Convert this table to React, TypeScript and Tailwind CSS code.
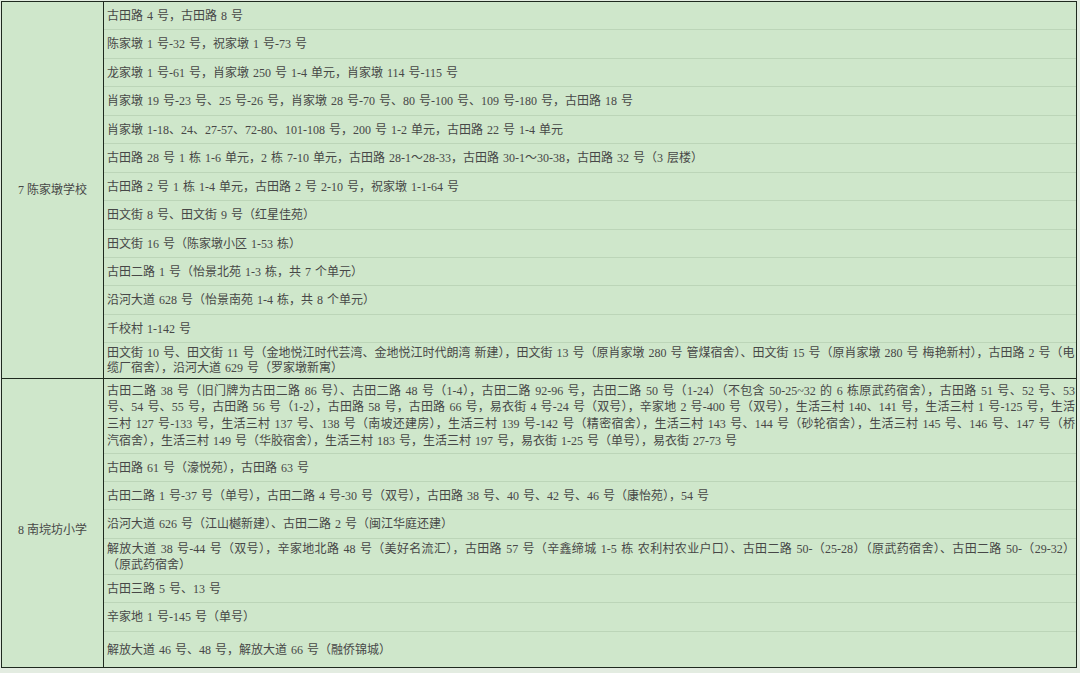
import React from "react";

type Line = { t: string; j?: boolean };
type Row = { h: string; lines: Line[]; leading?: string };

const L = (t: string, j = false): Line => ({ t, j });

const group1: Row[] = [
  { h: "h-[28px]", lines: [L("古田路 4 号，古田路 8 号")] },
  { h: "h-[29px]", lines: [L("陈家墩 1 号-32 号，祝家墩 1 号-73 号")] },
  { h: "h-[28px]", lines: [L("龙家墩 1 号-61 号，肖家墩 250 号 1-4 单元，肖家墩 114 号-115 号")] },
  { h: "h-[29px]", lines: [L("肖家墩 19 号-23 号、25 号-26 号，肖家墩 28 号-70 号、80 号-100 号、109 号-180 号，古田路 18 号")] },
  { h: "h-[28px]", lines: [L("肖家墩 1-18、24、27-57、72-80、101-108 号，200 号 1-2 单元，古田路 22 号 1-4 单元")] },
  { h: "h-[29px]", lines: [L("古田路 28 号 1 栋 1-6 单元，2 栋 7-10 单元，古田路 28-1～28-33，古田路 30-1～30-38，古田路 32 号（3 层楼）")] },
  { h: "h-[28px]", lines: [L("古田路 2 号 1 栋 1-4 单元，古田路 2 号 2-10 号，祝家墩 1-1-64 号")] },
  { h: "h-[29px]", lines: [L("田文街 8 号、田文街 9 号（红星佳苑）")] },
  { h: "h-[28px]", lines: [L("田文街 16 号（陈家墩小区 1-53 栋）")] },
  { h: "h-[28px]", lines: [L("古田二路 1 号（怡景北苑 1-3 栋，共 7 个单元）")] },
  { h: "h-[29px]", lines: [L("沿河大道 628 号（怡景南苑 1-4 栋，共 8 个单元）")] },
  { h: "h-[28px]", lines: [L("千校村 1-142 号")] },
  {
    h: "h-[35px]",
    leading: "leading-[15px]",
    lines: [
      L("田文街 10 号、田文街 11 号（金地悦江时代芸湾、金地悦江时代朗湾 新建），田文街 13 号（原肖家墩 280 号 管煤宿舍）、田文街 15 号（原肖家墩 280 号 梅艳新村），古田路 2 号（电"),
      L("缆厂宿舍），沿河大道 629 号（罗家墩新寓）"),
    ],
  },
];

const group2: Row[] = [
  {
    h: "h-[75px]",
    leading: "leading-[16.7px]",
    lines: [
      L("古田二路 38 号（旧门牌为古田二路 86 号）、古田二路 48 号（1-4），古田二路 92-96 号，古田二路 50 号（1-24）（不包含 50-25~32 的 6 栋原武药宿舍），古田路 51 号、52 号、53", true),
      L("号、54 号、55 号，古田路 56 号（1-2），古田路 58 号，古田路 66 号，易衣街 4 号-24 号（双号），辛家地 2 号-400 号（双号），生活三村 140、141 号，生活三村 1 号-125 号，生活", true),
      L("三村 127 号-133 号，生活三村 137 号、138 号（南坡还建房），生活三村 139 号-142 号（精密宿舍），生活三村 143 号、144 号（砂轮宿舍），生活三村 145 号、146 号、147 号（桥", true),
      L("汽宿舍），生活三村 149 号（华胶宿舍），生活三村 183 号，生活三村 197 号，易衣街 1-25 号（单号），易衣街 27-73 号"),
    ],
  },
  { h: "h-[28px]", lines: [L("古田路 61 号（濠悦苑），古田路 63 号")] },
  { h: "h-[28px]", lines: [L("古田二路 1 号-37 号（单号），古田二路 4 号-30 号（双号），古田路 38 号、40 号、42 号、46 号（康怡苑），54 号")] },
  { h: "h-[29px]", lines: [L("沿河大道 626 号（江山樾新建）、古田二路 2 号（闽江华庭还建）")] },
  {
    h: "h-[36px]",
    leading: "leading-[16px]",
    lines: [
      L("解放大道 38 号-44 号（双号），辛家地北路 48 号（美好名流汇），古田路 57 号（辛鑫缔城 1-5 栋 农利村农业户口）、古田二路 50-（25-28）（原武药宿舍）、古田二路 50-（29-32）", true),
      L("（原武药宿舍）"),
    ],
  },
  { h: "h-[28px]", lines: [L("古田三路 5 号、13 号")] },
  { h: "h-[29px]", lines: [L("辛家地 1 号-145 号（单号）")] },
  { h: "h-[35px]", lines: [L("解放大道 46 号、48 号，解放大道 66 号（融侨锦城）")] },
];

function Rows({ rows }: { rows: Row[] }) {
  return (
    <div className="flex-1 min-w-0 flex flex-col">
      {rows.map((r, i) => (
        <div
          key={i}
          className={`${r.h} box-border flex flex-col justify-center overflow-hidden pl-[3px] pr-[1px] ${
            i < rows.length - 1 ? "border-b border-[#bcd5b8]" : ""
          }`}
        >
          {r.lines.map((l, j) => (
            <div
              key={j}
              className={`whitespace-nowrap ${r.leading ?? "leading-[16px]"} ${
                l.j ? "text-justify [text-align-last:justify]" : ""
              }`}
            >
              {l.t}
            </div>
          ))}
        </div>
      ))}
    </div>
  );
}

export default function App() {
  return (
    <div
      className="w-[1080px] h-[673px] bg-[#e3ece1] overflow-hidden pt-[1px] pl-[1px] text-[12px] text-[#474747] [word-spacing:1px]"
      style={{ fontFamily: '"Liberation Serif", "Noto Sans CJK SC", serif' }}
    >
      <div className="w-[1076px] box-border border border-[#1f2a1f] bg-[#cfe7cb] flex flex-col">
        <div className="flex border-b border-[#1f2a1f]">
          <div className="w-[102px] shrink-0 border-r border-[#1f2a1f] flex items-center justify-center text-[12px] [word-spacing:0px]">
            7 陈家墩学校
          </div>
          <Rows rows={group1} />
        </div>
        <div className="flex">
          <div className="w-[102px] shrink-0 border-r border-[#1f2a1f] flex items-center justify-center pt-[14px] text-[12px] [word-spacing:0px]">
            8 南垸坊小学
          </div>
          <Rows rows={group2} />
        </div>
      </div>
    </div>
  );
}
